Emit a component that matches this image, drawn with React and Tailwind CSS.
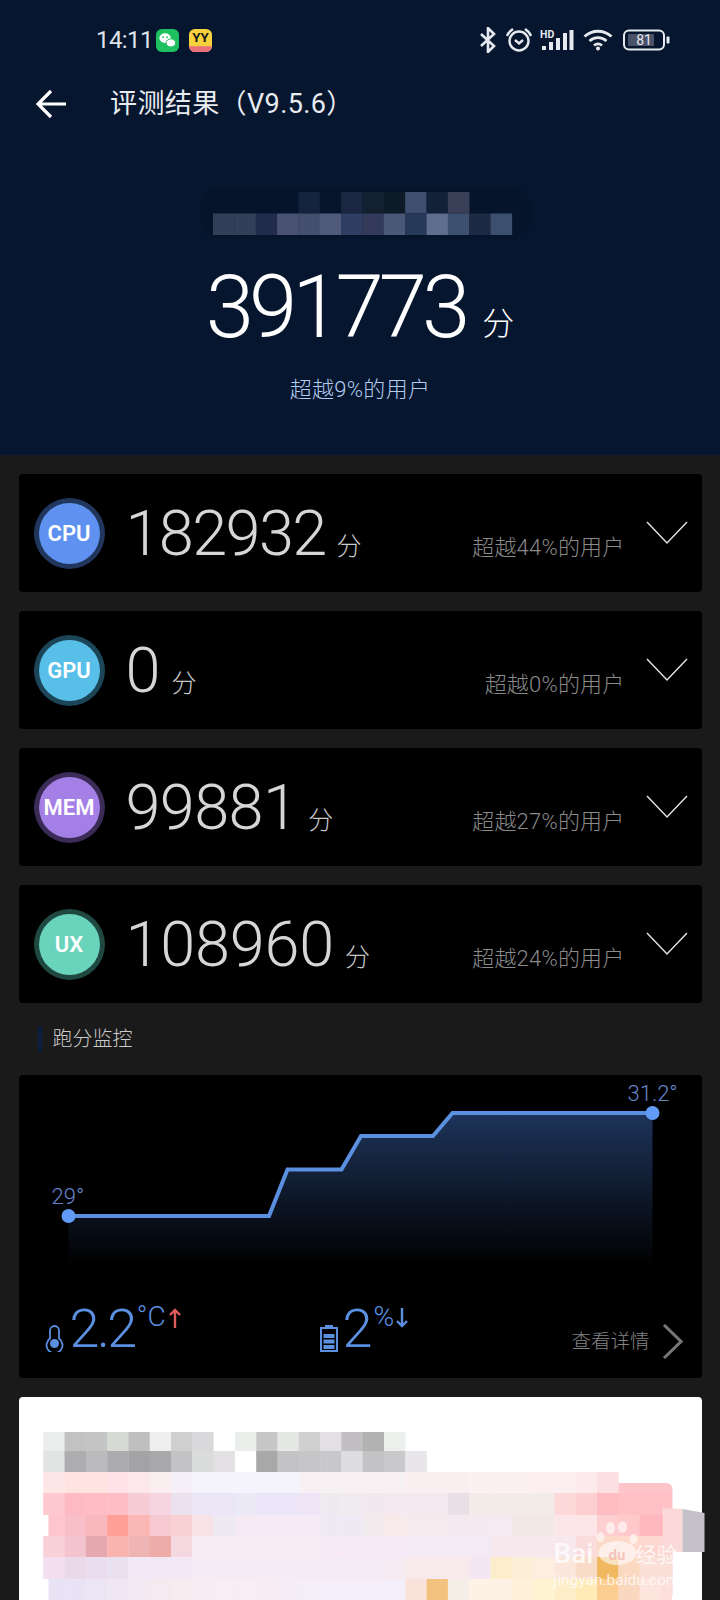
const sans = "[font-family:Roboto,'Noto_Sans_CJK_SC',sans-serif]";

const scores = [
  { id: "CPU", score: "182932", track: "tracking-[-1.6px]", pct: "超越44%的用户", ring: "bg-[#21365c]", fill: "bg-[#5f92f0]" },
  { id: "GPU", score: "0", track: "tracking-[0px]", pct: "超越0%的用户", ring: "bg-[#1c4658]", fill: "bg-[#58bfe9]" },
  { id: "MEM", score: "99881", track: "tracking-[-0.6px]", pct: "超越27%的用户", ring: "bg-[#3a2c57]", fill: "bg-[#a47fe6]" },
  { id: "UX", score: "108960", track: "tracking-[-0.2px]", pct: "超越24%的用户", ring: "bg-[#1e4840]", fill: "bg-[#69d3bb]" },
];

// pixelated device name in the header
const nameBlocks = [
  [null, null, null, null, "#14233e", "#07152c", "#1b2640", "#132030", "#0d1a28", "#3d4e6f", "#122038", "#383f56"],
  ["#333f59", "#333f59", "#212c4b", "#4a5271", "#434f6d", "#4f5b78", "#2f3f63", "#333a5a", "#495876", "#27395a", "#5f6d8e", "#3e5070", "#1d2a45", "#3d4f6e"],
];

// pixelated banner in the white card: [top, height, colours]
const bannerRows = [
  [1432, 19, ["#eceded", "#c2c2c3", "#c4c4c5", "#d5dad5", "#bfbfc0", "#eeeeee", "#cfcfd0", "#d9d9db", "#ffffff", "#eaefec", "#c6c6c7", "#e4e9e6", "#d0d0d1", "#e3e0e3", "#c1bfc2", "#b2b2b2", "#ebf0ed"]],
  [1451, 21, ["#e2e3e3", "#adadaf", "#bbbabd", "#acacaf", "#a3a3a6", "#a8a8aa", "#c3c3c6", "#dadbdb", "#e3e1e4", "#ffffff", "#a8a8a9", "#c3c2c5", "#c6c6c8", "#c8c8cb", "#dddddf", "#c3c3c6", "#c9c9cc", "#e8e6ea"]],
  [1472, 21, ["#fde6e6", "#ffe3e0", "#ffe3e0", "#ffe3e8", "#fde7ea", "#f9edf0", "#f5f0f7", "#f5f3fc", "#f5f3fc", "#f5f3fc", "#f5f3fc", "#f5f3fc", "#f8f1f4", "#f8f1f4", "#f8f1f4", "#f8f1f4", "#f8f1f4", "#fbeef1", "#fbeef1", "#fbeef1", "#fdf0f2", "#fdf0f2", "#fdf0f2", "#fdeef1", "#fdeef1", "#fdeaec", "#fbdfe1"]],
  [1493, 22, ["#ffc9cf", "#ffb9c2", "#ffbcc4", "#ffbdc6", "#f7ccd4", "#f6d5e0", "#ece1ef", "#ebe5f6", "#ebe5f6", "#ece9f6", "#ebe5f7", "#ebe5f7", "#ede5f6", "#eeebf0", "#f0ebef", "#f2e9ee", "#f3e9ee", "#f3e9ee", "#f3e9ee", "#e8e0e6", "#f3ebe8", "#f3ebe8", "#f3ebe8", "#f3ebe8", "#fcd9d8", "#fdcfd1", "#ffbdc2", "#ffc0c6", "#ffc0c6", "#ffc0c6"]],
  [1515, 21, ["#ffc5cc", "#f8bfc8", "#f7b9bd", "#ff9f96", "#fbb7b5", "#f7c9d0", "#f9d0d3", "#f7e2e8", "#eeeaf4", "#f5eaf4", "#f6eaf5", "#f6eaf5", "#f6eaf5", "#eeeaf4", "#eeeaf4", "#f1ebee", "#f8e9eb", "#f6eaee", "#f6eaee", "#f5e9ef", "#f5e9ef", "#f6e9ef", "#f3e8e4", "#f3e8e4", "#fce6e8", "#fce6e8", "#fdcfd0", "#ffc9cc", "#ffb8bf", "#ffb0b8"]],
  [1536, 21, ["#f7d0d8", "#f3c4d0", "#e4a8ae", "#fab4b0", "#efb4b4", "#eeaca8", "#f5d7e0", "#f7ecf3", "#f7ecf3", "#f7ecf3", "#f7ecf3", "#f7ecf3", "#f7ecf3", "#f7e8f6", "#f7e8f6", "#f7e8f6", "#f7e8f6", "#f3eaf5", "#f3eaf5", "#f3eaf5", "#f3eaf5", "#f7e8ee", "#f7e8ee", "#f7e8ee", "#f7e8ee", "#fbdcdc", "#fbd9c9", "#ffd9cc", "#fdd6d0", "#fdd6d0"]],
  [1557, 22, ["#f3dfef", "#ead9e8", "#ecdcf0", "#e9e0f0", "#f3e8f6", "#f3e8f6", "#f3e8f6", "#f5ebf5", "#f5ebf5", "#f5ebf5", "#f5ebf5", "#f5ebf5", "#f5ebf5", "#f5ebf5", "#f5ebf5", "#f5ebf5", "#f6eaf3", "#f8e9ea", "#f8e9ea", "#f8e9ea", "#f3e8f2", "#fdeecb", "#fdeed8", "#fdeee0", "#fbe6dc", "#f8dcc8", "#f0b860", "#fbd9c0", "#fbe0d8", "#fbe0d8"]],
  [1579, 21, ["#e8e4f5", "#e8e4f5", "#ebe6f5", "#efe8f4", "#f3e9f2", "#f6eaf0", "#f8ecf0", "#f8ecf2", "#f8edf2", "#f8edf2", "#f7ecf3", "#f5edf6", "#f3eef8", "#f3eefa", "#f3eefa", "#f3eefa", "#f3eefa", "#f8e2da", "#f4c27f", "#f5eee6", "#fef2e6", "#fef2e6", "#fef0d9", "#fff4d2", "#fdedc8", "#feebb8", "#fbcd90", "#fad8c0", "#fde4dc", "#fde0dc"]],
];

function StatusIcons() {
  return (
    <div className="ml-auto mr-[50px] flex items-center text-[#e6e9ef]">
      <svg width="18" height="26" viewBox="0 0 18 26" fill="none" stroke="currentColor" strokeWidth="2.6">
        <path d="M2 7l13 12-6 6V1l6 6L2 19" />
      </svg>
      <svg className="ml-[8px]" width="28" height="26" viewBox="0 0 28 26" fill="none" stroke="currentColor" strokeWidth="2.4">
        <circle cx="14" cy="14" r="9.5" />
        <path d="M10 13l4 3.5 4-3.5" />
        <path d="M2 9c1-3 3-5 6-7M26 9c-1-3-3-5-6-7" />
      </svg>
      <div className="ml-[7px] flex flex-col w-[34px] h-[22px]">
        <svg width="34" height="22" viewBox="0 0 34 22">
          <text x="0" y="9" fontSize="10.5" fontWeight="700" fill="currentColor" fontFamily="Roboto, sans-serif">HD</text>
          <rect x="2" y="17" width="4" height="4" fill="currentColor" />
          <rect x="9" y="13" width="4" height="8" fill="currentColor" />
          <rect x="16" y="9" width="4" height="12" fill="currentColor" />
          <rect x="23" y="4" width="4" height="17" fill="currentColor" />
          <rect x="29.5" y="1" width="4" height="20" fill="currentColor" />
        </svg>
      </div>
      <svg className="ml-[9px]" width="30" height="22" viewBox="0 0 30 22" fill="none" stroke="currentColor" strokeWidth="2.8">
        <path d="M1.5 7.5c8-7 19-7 27 0" />
        <path d="M6.5 12c5-4.5 12-4.5 17 0" />
        <path d="M11 16.500c2.500-2 5.500-2 8 0" />
        <circle cx="15" cy="19.500" r="2" fill="currentColor" stroke="none" />
      </svg>
      <svg className="ml-[10px]" width="47" height="22" viewBox="0 0 47 22">
        <rect x="1" y="1.500" width="40" height="19" rx="5" fill="none" stroke="currentColor" strokeWidth="2" />
        <rect x="5" y="5" width="26" height="12" rx="1" fill="#4a5268" />
        <text x="21" y="16" fontSize="14" textAnchor="middle" fill="#e6e9ef" fontFamily="Roboto, sans-serif">81</text>
        <rect x="43.500" y="7.500" width="3" height="7" rx="1" fill="currentColor" />
      </svg>
    </div>
  );
}

function Header() {
  return (
    <div className="h-[455px] bg-[#06162e] flex flex-col">
      <div className="h-[80px] flex items-center">
        <span className={`ml-[96px] text-[24px] text-[#dfe3ea] tracking-[-0.6px] ${sans}`}>14:11</span>
        <svg className="ml-[3px]" width="23" height="23" viewBox="0 0 24 24">
          <rect width="24" height="24" rx="6" fill="#1fc060" />
          <ellipse cx="9.500" cy="9.500" rx="6" ry="5" fill="#fff" />
          <ellipse cx="15.500" cy="14.500" rx="5" ry="4.200" fill="#fff" stroke="#1fc060" />
          <circle cx="7.500" cy="8.500" r="0.900" fill="#1fc060" />
          <circle cx="11.500" cy="8.500" r="0.900" fill="#1fc060" />
        </svg>
        <svg className="ml-[10px]" width="23" height="23" viewBox="0 0 24 24">
          <rect width="24" height="24" rx="6" fill="#f7d23e" />
          <path d="M0 18h24a6 6 0 0 1-6 6H6a6 6 0 0 1-6-6z" fill="#e8707a" />
          <text x="12" y="14" fontSize="14" fontWeight="700" textAnchor="middle" fill="#1b1b1b" fontFamily="Roboto, sans-serif">YY</text>
        </svg>
        <StatusIcons />
      </div>

      <div className="h-[48px] flex items-center">
        <svg className="ml-[36px]" width="31" height="30" viewBox="0 0 31 30" fill="none" stroke="#fff" strokeWidth="3.2">
          <path d="M30 15H3M15 2L2 15l13 13" />
        </svg>
        <h1 className={`ml-[43px] text-[27px] text-[#e8ebf0] tracking-[0.4px] ${sans}`}>评测结果（V9.5.6）</h1>
      </div>

      <svg className="block ml-[190px] mt-[58px] overflow-visible" width="350" height="55" viewBox="190 186 350 55">
        <rect x="200" y="188" width="330" height="50" rx="20" fill="#05142b" />
        {nameBlocks.map((row, r) =>
          row.map((c, i) => c && <rect key={`${r}-${i}`} x={213 + i * 21.35} y={192 + r * 21.5} width="21.6" height="21.5" fill={c} />)
        )}
      </svg>

      <div className={`mt-[18px] flex items-baseline justify-center text-white ${sans}`}>
        <span className="text-[87px] leading-[96px] font-light tracking-[-5px]">391773</span>
        <span className="ml-[17px] text-[32px] font-light -translate-y-[2px]">分</span>
      </div>
      <p className={`mt-[20px] text-center text-[22px] leading-[30px] text-[#b4cbf0] font-light tracking-[0.3px] ${sans}`}>超越9%的用户</p>
    </div>
  );
}

function ScoreCard({ item }) {
  return (
    <div className="h-[118px] rounded-[4px] bg-black flex items-center">
      <div className={`ml-[15px] w-[71px] h-[71px] rounded-full flex items-center justify-center shrink-0 ${item.ring}`}>
        <div className={`w-[61px] h-[61px] rounded-full flex items-center justify-center text-white text-[22px] font-semibold ${sans} ${item.fill}`}>
          {item.id}
        </div>
      </div>
      <div className={`ml-[21px] mt-[2px] flex-1 flex items-baseline ${sans}`}>
        <span className={`text-[63px] leading-[72px] font-light text-[#d6d6d6] ${item.track}`}>{item.score}</span>
        <span className="ml-[11px] text-[25px] font-light text-[#c8c8c8]">分</span>
        <span className="ml-auto text-[22px] font-light text-[#8a8a8a] tracking-[0.2px]">{item.pct}</span>
      </div>
      <svg className="ml-[21px] mr-[14px] shrink-0" width="42" height="24" viewBox="0 0 42 24" fill="none" stroke="#e0e0e0" strokeWidth="1.500">
        <path d="M1 1l20 21L41 1" />
      </svg>
    </div>
  );
}

function TempChart() {
  const line = "M68 1216H268.500L287 1169.500H341L360.500 1136H432.500L452 1113H652";
  return (
    <svg className="block" width="683" height="215" viewBox="18.500 1075 683 215">
      <defs>
        <linearGradient id="area" x1="0" y1="1113" x2="0" y2="1265" gradientUnits="userSpaceOnUse">
          <stop offset="0" stopColor="#1e345b" />
          <stop offset="1" stopColor="#000" />
        </linearGradient>
      </defs>
      <path d={`${line}V1265H68Z`} fill="url(#area)" />
      <path d={line} fill="none" stroke="#5b8fe0" strokeWidth="4" />
      <circle cx="68" cy="1216" r="7" fill="#629bf5" />
      <circle cx="652" cy="1113" r="7" fill="#629bf5" />
      <text x="51" y="1204" fontSize="22" fontWeight="300" fill="#6785cc" fontFamily="Roboto, sans-serif">29°</text>
      <text x="627" y="1101" fontSize="22" fontWeight="300" fill="#6785cc" fontFamily="Roboto, sans-serif">31.2°</text>
    </svg>
  );
}

function MonitorCard() {
  return (
    <div className={`h-[303px] rounded-[4px] bg-black ${sans}`}>
      <TempChart />
      <div className="h-[88px] flex items-start">
        <div className="ml-[26px] w-[275px] flex items-start text-[#5b8fe0]">
          <svg className="mt-[35px]" width="19" height="27" viewBox="0 0 19 27" fill="none" stroke="currentColor" strokeWidth="1.800">
            <path d="M5 13.500V5.500a4.500 4.500 0 0 1 9 0v8a8 8 0 1 1-9 0z" />
            <circle cx="9.500" cy="18.500" r="4.500" fill="currentColor" stroke="none" />
          </svg>
          <span className="ml-[6px] mt-[7px] text-[54px] leading-[64px] font-light tracking-[-2.5px]">2.2</span>
          <span className="mt-[12px] ml-[2px] text-[28px] leading-[30px] font-light">°C</span>
          <svg className="mt-[18px] ml-[3px]" width="12" height="20" viewBox="0 0 12 20" fill="none" stroke="#e05c5c" strokeWidth="2.400">
            <path d="M6 20V2M1 7l5-5 5 5" />
          </svg>
        </div>
        <div className="flex items-start text-[#5b8fe0]">
          <svg className="mt-[35px]" width="18" height="27" viewBox="0 0 18 27" fill="none">
            <path d="M5 0h8v2H5z" fill="currentColor" />
            <rect x="1" y="3" width="16" height="23" stroke="currentColor" strokeWidth="2" />
            <rect x="3.500" y="9" width="11" height="4" fill="currentColor" />
            <rect x="3.500" y="14.500" width="11" height="4" fill="currentColor" />
            <rect x="3.500" y="20" width="11" height="4" fill="currentColor" />
          </svg>
          <span className="ml-[5px] mt-[7px] text-[54px] leading-[64px] font-light">2</span>
          <span className="mt-[12px] ml-[1px] text-[28px] leading-[30px] font-light">%</span>
          <svg className="mt-[18px] ml-[2px]" width="12" height="20" viewBox="0 0 12 20" fill="none" stroke="currentColor" strokeWidth="2.400">
            <path d="M6 0v18M1 13l5 5 5-5" />
          </svg>
        </div>
        <div className="ml-auto mr-[19px] flex items-center mt-[34px]">
          <span className="text-[19.500px] font-light text-[#828282]">查看详情</span>
          <svg className="ml-[12px]" width="21" height="35" viewBox="0 0 21 35" fill="none" stroke="#777" strokeWidth="3">
            <path d="M2 1l17 16.500L2 34" />
          </svg>
        </div>
      </div>
    </div>
  );
}

function BannerCard() {
  return (
    <div className="h-[203px] rounded-t-[4px] bg-white">
      <svg className="block overflow-visible" width="683" height="203" viewBox="18.500 1397 683 203">
        <rect x="595" y="1483" width="77" height="117" rx="6" fill="#fdc4c9" />
        {bannerRows.map(([top, h, colours], r) =>
          colours.map((c, i) => (
            <rect key={`${r}-${i}`} x={42.7 + i * 21.3} y={top} width={i === 29 ? 11 : 21.6} height={h + 0.5} fill={c} />
          ))
        )}
        <rect x="42" y="1515" width="6" height="21" fill="#fff" />
        <rect x="42" y="1579" width="6" height="21" fill="#fff" />
        <path d="M662 1508l20 1v43h-20z" fill="#fbd9d8" />
        <path d="M682 1509l22 4v39h-22z" fill="#c4c2c8" />
        <g fill="#fff" opacity="0.6">
          <ellipse cx="600" cy="1537" rx="4" ry="5" />
          <ellipse cx="610" cy="1528" rx="4.500" ry="6" />
          <ellipse cx="622" cy="1527" rx="4.500" ry="6" />
          <ellipse cx="633" cy="1539" rx="4" ry="5" />
          <ellipse cx="617" cy="1553" rx="19" ry="12" />
        </g>
        <g fontFamily="Roboto, 'Noto Sans CJK SC', sans-serif" fill="#fff" opacity="0.75">
          <text x="553" y="1563" fontSize="28" fontWeight="500">Bai</text>
          <text x="608" y="1560" fontSize="15" fontWeight="700" fill="#f3b9b0">du</text>
          <text x="635" y="1562" fontSize="21">经验</text>
          <text x="553" y="1585" fontSize="15.500">jingyan.baidu.com</text>
        </g>
      </svg>
    </div>
  );
}

export default function App() {
  return (
    <div className="w-[720px] h-[1600px] overflow-hidden bg-[#1a1a1a]">
      <Header />
      <div className="mx-[18.500px] pt-[19px] flex flex-col gap-[19px]">
        {scores.map((item) => (
          <ScoreCard key={item.id} item={item} />
        ))}
      </div>
      <div className="mx-[18.500px]">
        <div className="h-[72px] flex items-center">
          <div className="ml-[19px] w-[4px] h-[26px] bg-[#0a1e3f]" />
          <span className={`ml-[11px] text-[20px] font-light text-[#cccccc] ${sans}`}>跑分监控</span>
        </div>
        <MonitorCard />
        <div className="h-[19px]" />
        <BannerCard />
      </div>
    </div>
  );
}
